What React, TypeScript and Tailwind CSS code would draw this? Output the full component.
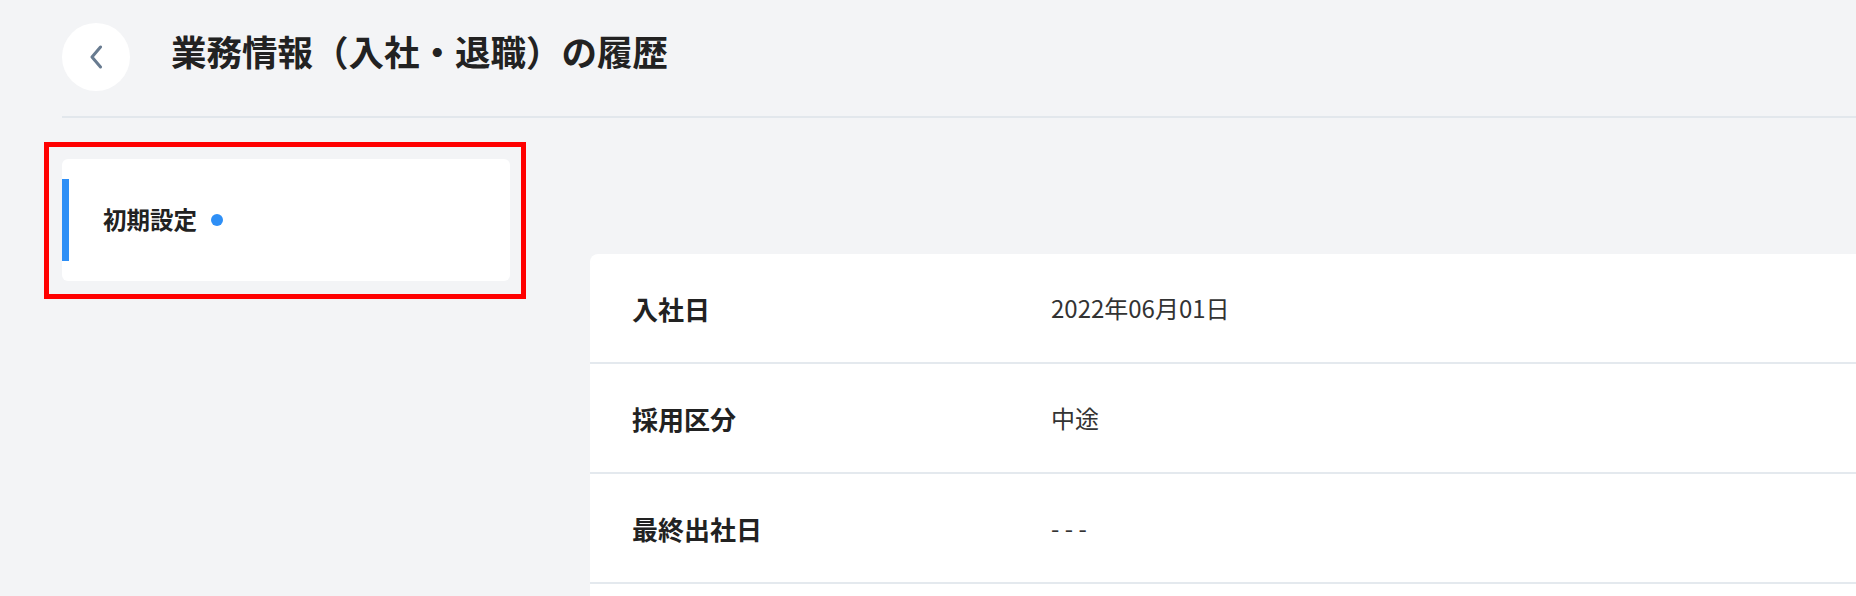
const rows = [
  { label: '入社日', value: '2022年06月01日' },
  { label: '採用区分', value: '中途' },
  { label: '最終出社日', value: '- - -' },
];

export default function App() {
  return (
    <div className="min-h-screen overflow-hidden bg-[#f3f4f6] font-['Noto_Sans_CJK_JP','Noto_Sans',sans-serif] text-[#222]">
      {/* Header */}
      <header className="ml-[62px] flex items-center border-b-2 border-[#e2e7ec] pt-[23px] pb-[25px]">
        <button className="flex h-[68px] w-[68px] shrink-0 items-center justify-center rounded-full bg-white">
          <svg width="14" height="24" viewBox="0 0 14 24" fill="none" className="-ml-[1px]">
            <polyline
              points="11.5,2 3,12 11.5,22"
              stroke="#687b90"
              strokeWidth="3"
              strokeLinecap="round"
              strokeLinejoin="round"
            />
          </svg>
        </button>
        <h1 className="ml-[41px] pb-[12px] text-[35.5px] font-bold leading-[1.4]">
          業務情報（入社・退職）の履歴
        </h1>
      </header>

      <div className="ml-[44px] flex items-start">
        {/* Sidebar (highlighted) */}
        <div className="mt-[24px] w-[482px] shrink-0 border-[5px] border-[#ff0000] pt-[12px] pr-[11px] pb-[13px] pl-[13px]">
          <div className="flex h-[122px] items-center rounded-[6px] bg-white">
            <div className="h-[82px] w-[7px] bg-[#2e8ff6]" />
            <span className="ml-[34px] text-[23.5px] font-bold leading-none">初期設定</span>
            <span className="ml-[14px] h-[12px] w-[12px] rounded-full bg-[#2e8ff6]" />
          </div>
        </div>

        {/* Detail card */}
        <div className="mt-[136px] ml-[64px] w-[1400px] shrink-0 rounded-[8px] bg-white">
          {rows.map((r) => (
            <div key={r.label} className="flex h-[110px] items-center border-b-2 border-[#e4e9ee]">
              <div className="w-[461px] shrink-0 pl-[42px] text-[26px] font-bold">{r.label}</div>
              <div className="text-[24px] text-[#333]">{r.value}</div>
            </div>
          ))}
          <div className="h-[110px]" />
        </div>
      </div>
    </div>
  );
}
